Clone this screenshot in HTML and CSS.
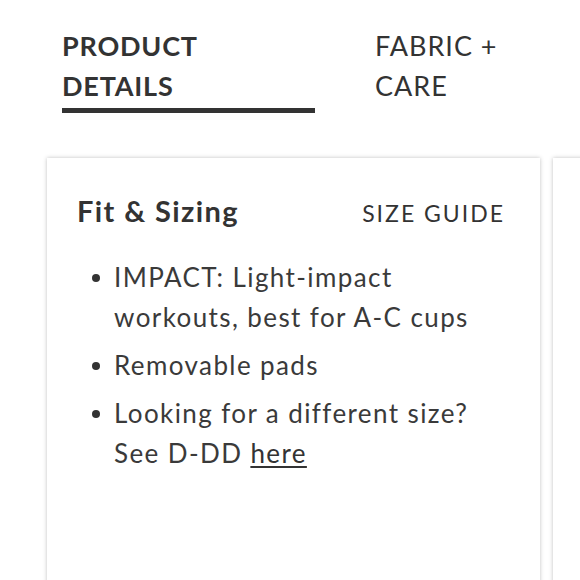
FILE: index.html
```html
<!DOCTYPE html>
<html>
<head>
<meta charset="utf-8">
<link rel="stylesheet" href="styles.css">
</head>
<body>
<div class="page">
  <nav class="tabs">
    <div class="tab active">PRODUCT<br>DETAILS</div>
    <div class="tab">FABRIC +<br>CARE</div>
  </nav>
  <div class="cards">
    <section class="card">
      <header class="card-head">
        <h2 class="card-title">Fit &amp; Sizing</h2>
        <span class="size-guide">SIZE GUIDE</span>
      </header>
      <ul class="points">
        <li>IMPACT: Light-impact workouts, best for A-C cups</li>
        <li>Removable pads</li>
        <li>Looking for a different size? See D-DD <a class="link" href="#">here</a></li>
      </ul>
    </section>
    <section class="card card-next"></section>
  </div>
</div>
</body>
</html>
```

FILE: styles.css
```css
* { box-sizing: border-box; }
html, body { margin: 0; padding: 0; background: #fff; }
body {
  width: 580px;
  height: 580px;
  overflow: hidden;
  font-family: Lato, "Noto Sans", sans-serif;
  color: #333;
}
.page { padding-top: 26px; }
.tabs {
  display: flex;
  padding-left: 62px;
}
.tab {
  font-size: 27px;
  line-height: 40px;
  letter-spacing: 0.8px;
  color: #333;
}
.tab.active {
  font-weight: 700;
  width: 253px;
  padding-bottom: 2px;
  border-bottom: 5px solid #333;
}
.tab + .tab {
  margin-left: 60px;
  font-weight: 400;
  letter-spacing: 1px;
}
.cards {
  display: flex;
  gap: 13px;
  margin-top: 45px;
  padding-left: 47px;
}
.card {
  flex: 0 0 493px;
  height: 440px;
  background: #fff;
  box-shadow: 0 0 4px rgba(0,0,0,0.25);
  padding: 33px 35px 0 30px;
}
.card-next { flex: 0 0 100px; padding: 0; }
.card-head {
  display: flex;
  justify-content: space-between;
  align-items: baseline;
}
.card-title {
  margin: 0;
  font-size: 29px;
  font-weight: 700;
  line-height: 40px;
  letter-spacing: 1.4px;
}
.size-guide {
  font-size: 23px;
  letter-spacing: 2px;
}
.points {
  list-style: none;
  margin: 26px 0 0;
  padding: 0 0 0 37px;
}
.points li {
  position: relative;
  font-size: 26px;
  line-height: 40px;
  margin-bottom: 8px;
  letter-spacing: 1.4px;
  color: #3a3a3a;
}
.points li::before {
  content: "";
  position: absolute;
  left: -22px;
  top: 17px;
  width: 8px;
  height: 8px;
  border-radius: 50%;
  background: #333;
}
.link {
  color: #333;
  text-decoration: underline;
  text-underline-offset: 3px;
}
```
